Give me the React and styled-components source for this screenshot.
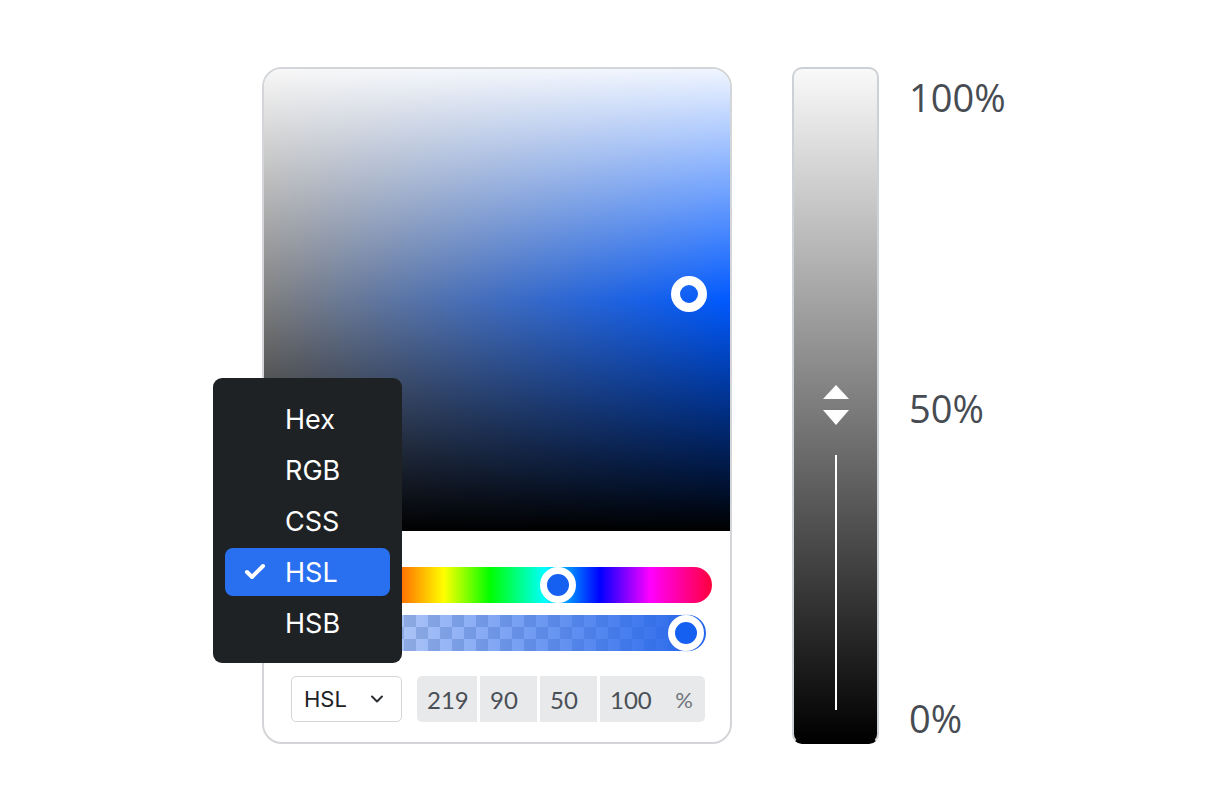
import React from 'react';
import styled, { createGlobalStyle } from 'styled-components';
import { Check, ChevronDown } from 'lucide-react';

const GlobalStyle = createGlobalStyle`
  html, body {
    margin: 0;
    padding: 0;
    background: #ffffff;
  }
  body {
    font-family: "Inter", "Liberation Sans", sans-serif;
  }
`

const Page = styled.div`
  display: flex;
  align-items: flex-start;
  padding: 67px 0 0 262px;
  width: 1224px;
  height: 810px;
  box-sizing: border-box;
`

const Card = styled.div`
  position: relative;
  width: 470px;
  height: 677px;
  box-sizing: border-box;
  border: 2px solid #d3d5d8;
  border-radius: 20px;
  background: #fff;
  display: flex;
  flex-direction: column;
`

const Field = styled.div`
  position: relative;
  height: 462px;
  border-radius: 18px 18px 0 0;
  background:
    linear-gradient(to bottom, rgba(255, 255, 255, 0.94) 0%, rgba(255, 255, 255, 0) 50%, rgba(0, 0, 0, 0) 50%, #000 100%),
    linear-gradient(to right, hsl(219, 0%, 50%), hsl(219, 100%, 50%));
`

const Handle = styled.div`
  position: absolute;
  width: ${p => p.$size}px;
  height: ${p => p.$size}px;
  box-sizing: border-box;
  border-radius: 50%;
  border: ${p => p.$ring}px solid #fff;
  background: ${p => p.$fill || 'transparent'};
  transform: translate(-50%, -50%);
  box-shadow: ${p => p.$shadow ? '0 0 0 1px rgba(37, 99, 235, 0.15)' : 'none'};
`

const Sliders = styled.div`
  display: flex;
  flex-direction: column;
  gap: 12px;
  padding: 36px 18px 0 20px;
`

const Bar = styled.div`
  position: relative;
  height: 36px;
  border-radius: 18px;
  margin-right: ${p => p.$inset || 0}px;
`

const HueBar = styled(Bar)`
  background: linear-gradient(to right,
    #ff0000 0px, #ff2a00 90px, #ff8000 122px, #ffff00 160px, #00ff00 206px,
    #00ffff 261px, #0000ff 316px, #ff00ff 366px, #ff0040 427px);
`

const AlphaBar = styled(Bar)`
  background:
    linear-gradient(to right, rgba(37, 102, 235, 0.15), rgba(37, 102, 235, 1)),
    repeating-conic-gradient(#ffffff 0% 25%, #cfd4dc 0% 50%) 0 0 / 24px 24px;
`

const Controls = styled.div`
  display: flex;
  align-items: center;
  gap: 15px;
  padding: 25px 24px 0 27px;
`

const Select = styled.div`
  width: 111px;
  height: 46px;
  box-sizing: border-box;
  border: 1px solid #d4d6d9;
  border-radius: 5px;
  display: flex;
  align-items: center;
  justify-content: space-between;
  padding: 0 14px 0 12px;
  font-family: "Inter", "Liberation Sans", sans-serif;
  font-size: 22px;
  color: #1f2225;
`

const Inputs = styled.div`
  display: flex;
  gap: 3px;
  border-radius: 5px;
  overflow: hidden;
`

const Input = styled.div`
  width: ${p => p.$w}px;
  height: 46px;
  box-sizing: border-box;
  background: #e8e9eb;
  display: flex;
  align-items: center;
  justify-content: space-between;
  padding: 0 12px 0 10px;
  font-family: "Lato", "Liberation Sans", sans-serif;
  font-size: 24px;
  color: #4a4f56;
`

const Unit = styled.span`
  color: #6f747a;
  font-size: 22px;
`

const Menu = styled.div`
  position: absolute;
  left: -51px;
  top: 309px;
  width: 189px;
  box-sizing: border-box;
  padding: 17px 12px 16px;
  background: #1f2225;
  border-radius: 9px;
  display: flex;
  flex-direction: column;
  gap: 3px;
`

const MenuItem = styled.div`
  height: 48px;
  display: flex;
  align-items: center;
  padding-left: 60px;
  position: relative;
  border-radius: 8px;
  background: ${p => p.$active ? '#2870ef' : 'transparent'};
  color: #fff;
  font-family: "Inter", "Liberation Sans", sans-serif;
  font-size: 27px;

  svg {
    position: absolute;
    left: 18px;
    top: 12px;
  }
`

const Lightness = styled.div`
  width: 87px;
  height: 677px;
  margin-left: 60px;
  box-sizing: border-box;
  border: 2px solid #cdd0d4;
  border-bottom-color: #000;
  border-radius: 10px;
  background: linear-gradient(to bottom, #f9f9f9, #000);
  display: flex;
  flex-direction: column;
  align-items: center;
  padding-top: 316px;
`

const Arrows = styled.svg`
  display: block;
`

const Track = styled.div`
  width: 2px;
  height: 255px;
  margin-top: 30px;
  background: #fff;
`

const Labels = styled.div`
  height: 677px;
  margin-left: 30px;
  display: flex;
  flex-direction: column;
  justify-content: space-between;
  padding: 8px 0 4px;
  box-sizing: border-box;
  font-family: "Open Sans", "Liberation Sans", sans-serif;
  font-size: 38px;
  color: #474c53;
  line-height: 44px;
`

const formats = ['Hex', 'RGB', 'CSS', 'HSL', 'HSB'];

const App = () => {
  return (
    <>
      <GlobalStyle />
      <Page>
        <Card>
          <Field>
            <Handle $size={36} $ring={9} style={{ left: '91.2%', top: '48.7%' }} />
          </Field>
          <Sliders>
            <HueBar>
              <Handle $size={36} $ring={7} $fill="#1560f0" style={{ left: 274, top: 18 }} />
            </HueBar>
            <AlphaBar $inset={6}>
              <Handle $size={36} $ring={7} $fill="#1560f0" $shadow style={{ left: 402, top: 18 }} />
            </AlphaBar>
          </Sliders>
          <Controls>
            <Select>
              HSL
              <ChevronDown size={20} strokeWidth={2.4} color="#2a2d31" />
            </Select>
            <Inputs>
              <Input $w={60}>219</Input>
              <Input $w={57}>90</Input>
              <Input $w={57}>50</Input>
              <Input $w={105}>100<Unit>%</Unit></Input>
            </Inputs>
          </Controls>
          <Menu>
            {formats.map(f => (
              <MenuItem key={f} $active={f === 'HSL'}>
                {f === 'HSL' && <Check size={24} strokeWidth={4} color="#fff" />}
                {f}
              </MenuItem>
            ))}
          </Menu>
        </Card>
        <Lightness>
          <Arrows width="26" height="40" viewBox="0 0 26 40">
            <path d="M13 0 L26 14 L0 14 Z" fill="#fff" />
            <path d="M0 25 L26 25 L13 40 Z" fill="#fff" />
          </Arrows>
          <Track />
        </Lightness>
        <Labels>
          <span>100%</span>
          <span>50%</span>
          <span>0%</span>
        </Labels>
      </Page>
    </>
  )
}

export default App
